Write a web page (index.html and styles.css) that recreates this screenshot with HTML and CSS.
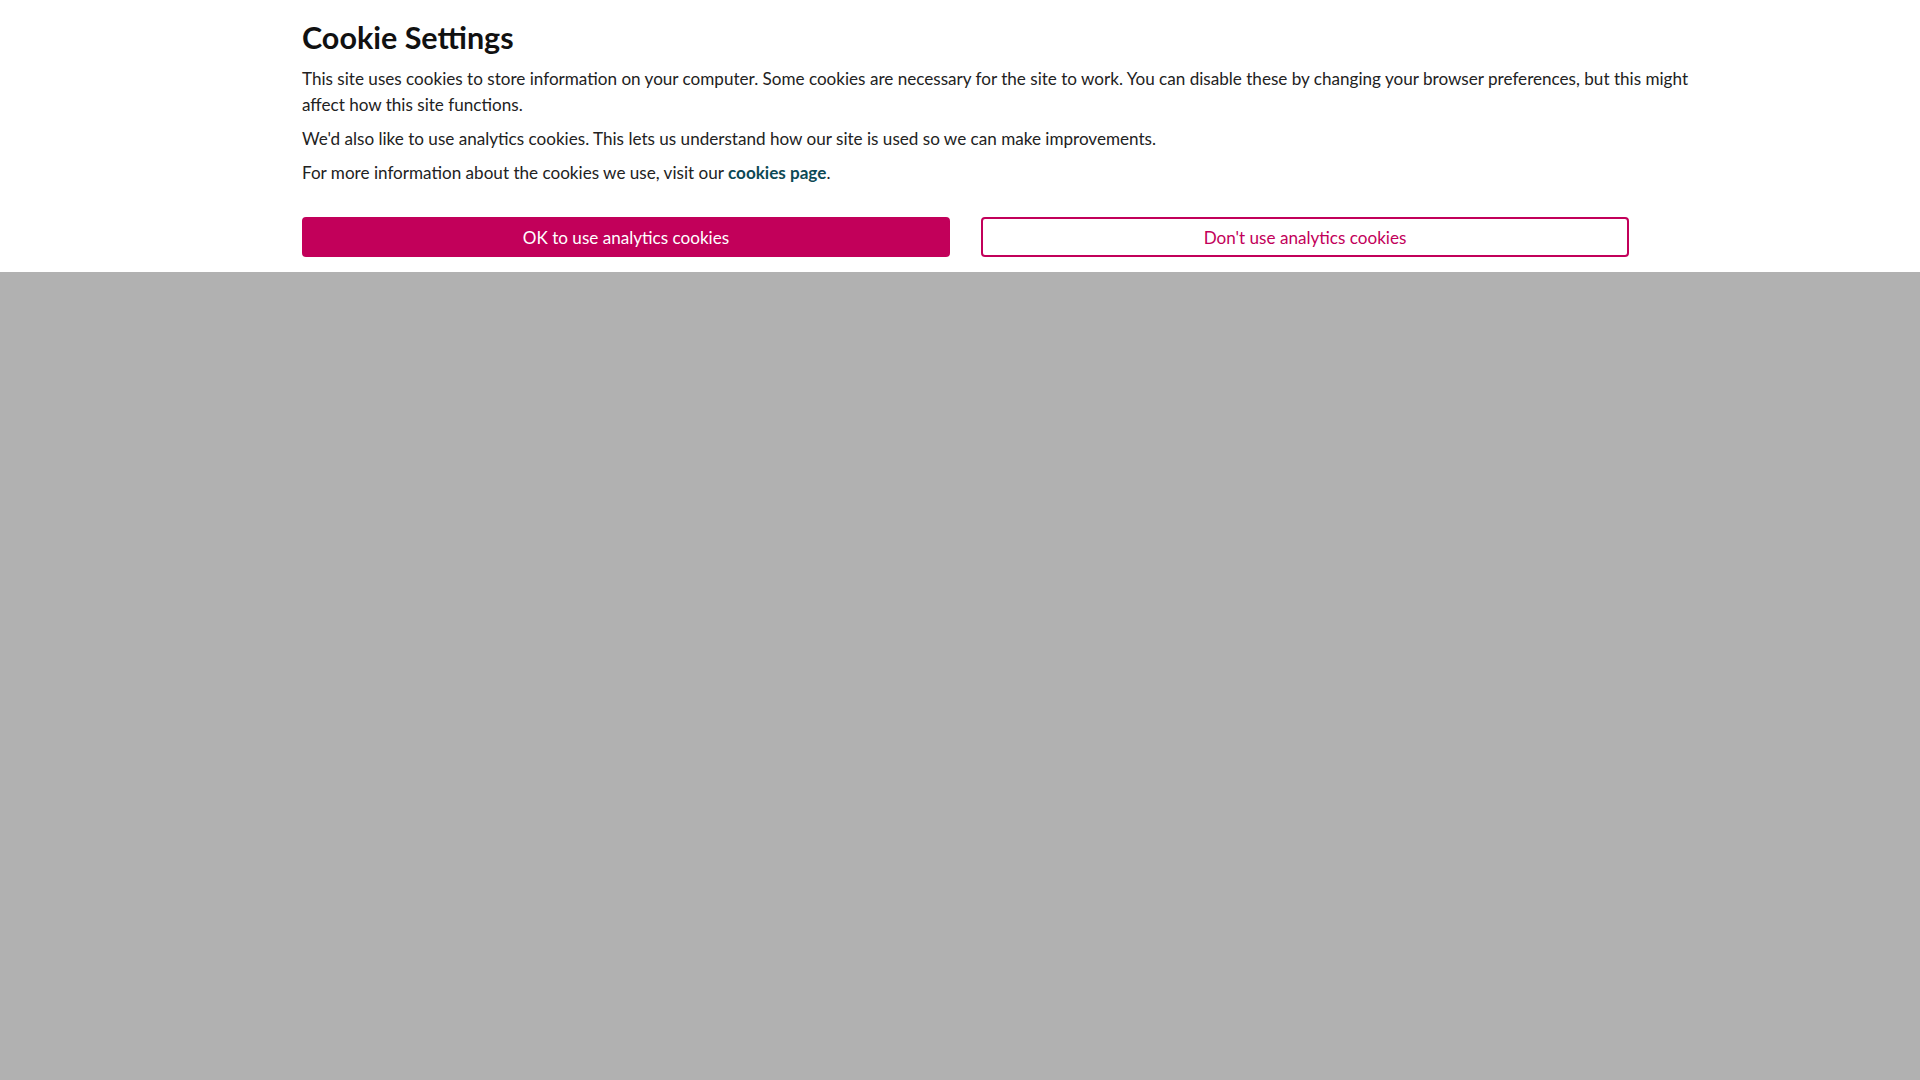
FILE: index.html
```html
<!DOCTYPE html>
<html lang="en">
<head>
<meta charset="utf-8">
<title>Cookie Settings</title>
<link rel="stylesheet" href="styles.css">
</head>
<body>
<div class="banner">
  <div class="banner-inner">
    <h2 class="title">Cookie Settings</h2>
    <p class="text">This site uses cookies to store information on your computer. Some cookies are necessary for the site to work. You can disable these by changing your browser preferences, but this might affect how this site functions.</p>
    <p class="text">We'd also like to use analytics cookies. This lets us understand how our site is used so we can make improvements.</p>
    <p class="text">For more information about the cookies we use, visit our <a class="link" href="#">cookies page</a>.</p>
    <div class="actions">
      <button class="btn btn-primary" type="button">OK to use analytics cookies</button>
      <button class="btn btn-outline" type="button">Don't use analytics cookies</button>
    </div>
  </div>
</div>
<div class="overlay"></div>
</body>
</html>
```
FILE: styles.css
```css
html, body {
  margin: 0;
  padding: 0;
  height: 100%;
}
body {
  background: #b1b1b1;
  font-family: "Lato", "Liberation Sans", sans-serif;
  color: #222222;
}
.banner {
  background: #ffffff;
  padding: 20px 0 15px 302px;
}
.banner-inner {
  width: 1400px;
}
.title {
  margin: 0 0 12px 0;
  font-size: 30.5px;
  line-height: 34px;
  font-weight: 700;
  color: #111111;
}
.text {
  margin: 0 0 8px 0;
  font-size: 17.1px;
  line-height: 26px;
}
.link {
  color: #0c4a55;
  font-weight: 700;
  text-decoration: none;
}
.actions {
  display: grid;
  grid-template-columns: 648px 648px;
  column-gap: 31px;
  margin-top: 31px;
}
.btn {
  height: 40px;
  border-radius: 4px;
  font-family: inherit;
  font-size: 17.1px;
  font-weight: 400;
  cursor: pointer;
}
.btn-primary {
  background: #c2005a;
  border: 2px solid #c2005a;
  color: #ffffff;
}
.btn-outline {
  background: #ffffff;
  border: 2px solid #c2005a;
  color: #c2005a;
}
```
